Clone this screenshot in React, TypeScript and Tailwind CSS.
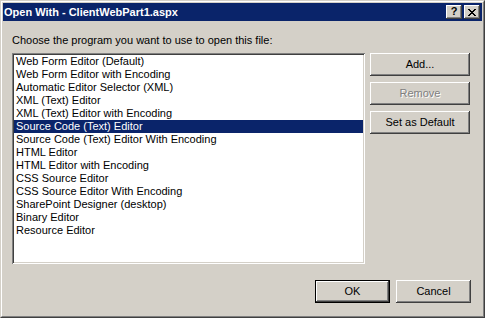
import React from 'react';

const programs = [
  'Web Form Editor (Default)',
  'Web Form Editor with Encoding',
  'Automatic Editor Selector (XML)',
  'XML (Text) Editor',
  'XML (Text) Editor with Encoding',
  'Source Code (Text) Editor',
  'Source Code (Text) Editor With Encoding',
  'HTML Editor',
  'HTML Editor with Encoding',
  'CSS Source Editor',
  'CSS Source Editor With Encoding',
  'SharePoint Designer (desktop)',
  'Binary Editor',
  'Resource Editor',
];

const bevel =
  'shadow-[inset_-1px_-1px_#404040,inset_1px_1px_#ffffff,inset_-2px_-2px_#808080]';

const ClassicButton: React.FC<{ label: string; disabled?: boolean; className?: string }> = ({
  label,
  disabled,
  className = '',
}) => (
  <button
    className={`flex items-center justify-center bg-[#d4d0c8] ${bevel} ${className} ${
      disabled ? 'text-[#808080] [text-shadow:1px_1px_#ffffff]' : 'text-black'
    }`}
  >
    {label}
  </button>
);

export default function App() {
  const selected = 5;

  return (
    <div className="w-[485px] h-[318px] bg-[#d4d0c8] border border-t-[#d4d0c8] border-l-[#d4d0c8] border-r-[#404040] border-b-[#404040] text-[11px] leading-[13px] text-black font-['Liberation_Sans',Arial,sans-serif] overflow-hidden">
      <div className="h-full flex flex-col border border-t-white border-l-white border-r-[#808080] border-b-[#808080] p-px">
        {/* title bar */}
        <div className="h-[18px] bg-[#0a246a] flex items-center pl-[1px] pr-[2px]">
          <span className="text-white font-bold text-[11px] flex-1">Open With - ClientWebPart1.aspx</span>
          <div className={`w-[16px] h-[14px] bg-[#d4d0c8] ${bevel} flex items-center justify-center font-bold text-[11px] leading-none pb-px`}>
            ?
          </div>
          <div className={`ml-[2px] w-[16px] h-[14px] bg-[#d4d0c8] ${bevel} flex items-center justify-center`}>
            <svg width="8" height="7" viewBox="0 0 8 7" shapeRendering="crispEdges">
              <path
                d="M0 0h2v1H0zM6 0h2v1H6zM1 1h2v1H1zM5 1h2v1H5zM2 2h4v1H2zM3 3h2v1H3zM2 4h4v1H2zM1 5h2v1H1zM5 5h2v1H5zM0 6h2v1H0zM6 6h2v1H6z"
                fill="#000"
              />
            </svg>
          </div>
        </div>

        {/* body */}
        <div className="flex-1 flex flex-col pl-[9px] pr-[9px] pb-[12px]">
          <div className="mt-[13px] h-[13px]">Choose the program you want to use to open this file:</div>
          <div className="mt-[6px] flex">
            <div className="w-[353px] h-[211px] bg-white shadow-[inset_1px_1px_#808080,inset_-1px_-1px_#ffffff,inset_2px_2px_#404040,inset_-2px_-2px_#d4d0c8] p-[2px]">
              {programs.map((p, i) => (
                <div
                  key={p}
                  className={`h-[13px] pl-[2px] whitespace-nowrap ${
                    i === selected ? 'bg-[#0a246a] text-white' : ''
                  }`}
                >
                  {p}
                </div>
              ))}
            </div>
            <div className="ml-[5px] flex flex-col gap-[6px]">
              <ClassicButton label="Add..." className="w-[100px] h-[23px]" />
              <ClassicButton label="Remove" disabled className="w-[100px] h-[23px]" />
              <ClassicButton label="Set as Default" className="w-[100px] h-[23px]" />
            </div>
          </div>
          <div className="mt-[16px] flex justify-end gap-[6px] pr-[2px]">
            <div className="border border-black">
              <ClassicButton label="OK" className="w-[73px] h-[21px]" />
            </div>
            <ClassicButton label="Cancel" className="w-[75px] h-[23px]" />
          </div>
        </div>
      </div>
    </div>
  );
}
